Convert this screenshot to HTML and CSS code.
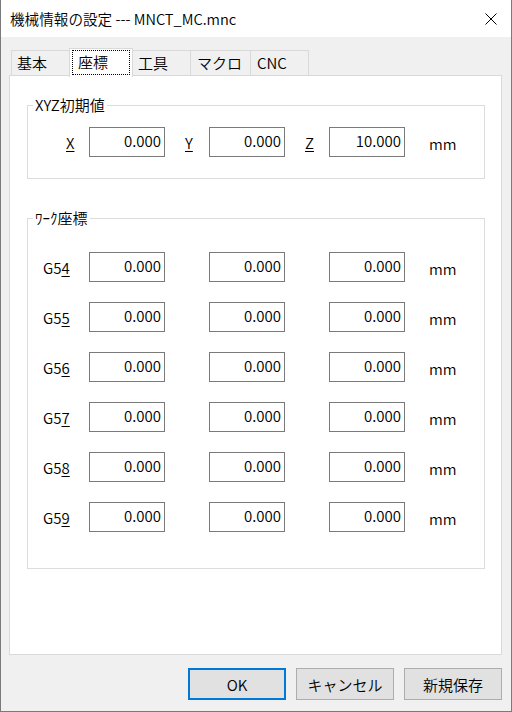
FILE: index.html
```html
<!DOCTYPE html>
<html lang="ja">
<head>
<meta charset="utf-8">
<title>機械情報の設定</title>
<link rel="stylesheet" href="styles.css">
</head>
<body>
<div class="window">
  <div class="titlebar">
    <span class="title">機械情報の設定 --- MNCT_MC.mnc</span>
    <svg class="close" width="12" height="12" viewBox="0 0 12 12"><path d="M0.5 0.5 L11.5 11.5 M11.5 0.5 L0.5 11.5" stroke="#000" stroke-width="1" fill="none"/></svg>
  </div>
  <div class="client">
    <div class="tabs">
      <div class="tab t1">基本</div>
      <div class="tab sel"><span class="focus">座標</span></div>
      <div class="tab t3">工具</div>
      <div class="tab t4">マクロ</div>
      <div class="tab t5">CNC</div>
    </div>
    <div class="panel">
      <div class="group g1">
        <span class="legend">XYZ初期値</span>
        <div class="rows">
          <div class="row">
            <span class="lbl l1x"><u>X</u></span><div class="box">0.000</div>
            <span class="lbl l2"><u>Y</u></span><div class="box">0.000</div>
            <span class="lbl l2"><u>Z</u></span><div class="box">10.000</div>
            <span class="lbl unit">mm</span>
          </div>
        </div>
      </div>
      <div class="group g2">
        <span class="legend">ﾜｰｸ座標</span>
        <div class="rows">
          <div class="row">
            <span class="lbl l1g">G5<u>4</u></span><div class="box">0.000</div>
            <span></span><div class="box">0.000</div>
            <span></span><div class="box">0.000</div>
            <span class="lbl unit">mm</span>
          </div>
          <div class="row">
            <span class="lbl l1g">G5<u>5</u></span><div class="box">0.000</div>
            <span></span><div class="box">0.000</div>
            <span></span><div class="box">0.000</div>
            <span class="lbl unit">mm</span>
          </div>
          <div class="row">
            <span class="lbl l1g">G5<u>6</u></span><div class="box">0.000</div>
            <span></span><div class="box">0.000</div>
            <span></span><div class="box">0.000</div>
            <span class="lbl unit">mm</span>
          </div>
          <div class="row">
            <span class="lbl l1g">G5<u>7</u></span><div class="box">0.000</div>
            <span></span><div class="box">0.000</div>
            <span></span><div class="box">0.000</div>
            <span class="lbl unit">mm</span>
          </div>
          <div class="row">
            <span class="lbl l1g">G5<u>8</u></span><div class="box">0.000</div>
            <span></span><div class="box">0.000</div>
            <span></span><div class="box">0.000</div>
            <span class="lbl unit">mm</span>
          </div>
          <div class="row">
            <span class="lbl l1g">G5<u>9</u></span><div class="box">0.000</div>
            <span></span><div class="box">0.000</div>
            <span></span><div class="box">0.000</div>
            <span class="lbl unit">mm</span>
          </div>
        </div>
      </div>
    </div>
    <div class="buttons">
      <button class="btn default">OK</button>
      <button class="btn">キャンセル</button>
      <button class="btn">新規保存</button>
    </div>
  </div>
</div>
</body>
</html>
```
FILE: styles.css
```css
* { box-sizing: border-box; }
html, body { margin: 0; padding: 0; }
body {
  width: 512px;
  height: 712px;
  background: #fff;
  font-family: "Noto Sans CJK JP", "Noto Sans", sans-serif;
  font-size: 15px;
  font-weight: 350;
  color: #000;
}
.window {
  width: 512px;
  height: 712px;
  border: 1px solid #7a7a7a;
  border-top: none;
  display: flex;
  flex-direction: column;
  background: #f0f0f0;
}
.titlebar {
  height: 37px;
  flex: none;
  background: #fff;
  display: flex;
  align-items: center;
  justify-content: space-between;
  padding: 0 14px 0 9px;
}
.title { font-size: 14.6px; line-height: 20px; }
.close { display: block; }
.client {
  flex: 1;
  min-height: 0;
  display: flex;
  flex-direction: column;
  padding: 11px 9px 11px 8px;
}
.tabs {
  flex: none;
  height: 27px;
  display: flex;
  align-items: flex-end;
  margin-left: 2px;
  position: relative;
  z-index: 1;
}
.tab {
  height: 25px;
  border: 1px solid #d9d9d9;
  border-bottom: none;
  background: #f0f0f0;
  padding-left: 5px;
  line-height: 24px;
  white-space: nowrap;
}
.t1 { width: 61px; }
.t3 { width: 61px; margin-left: -3px; padding-left: 7px; }
.t4 { width: 61px; margin-left: -1px; padding-left: 6px; }
.t5 { width: 59px; margin-left: -1px; padding-left: 6px; }
.sel {
  width: 64px;
  height: 29px;
  margin-left: -3px;
  margin-bottom: -2px;
  background: #fff;
  padding: 1px 2px 2px 2px;
  position: relative;
  z-index: 2;
}
.focus {
  display: block;
  height: 25px;
  border: 1px dotted #000;
  padding-left: 5px;
  line-height: 21px;
}
.panel {
  flex: 1;
  min-height: 0;
  background: #fff;
  border: 1px solid #d9d9d9;
  padding: 29px 16px 0 17px;
}
.group {
  border: 1px solid #dcdcdc;
}
.g1 { padding-bottom: 21px; }
.g2 { margin-top: 39px; padding-bottom: 36px; }
.legend {
  display: block;
  width: max-content;
  height: 20px;
  line-height: 20px;
  margin: -11px 0 0 5px;
  padding: 0 2px;
  background: #fff;
}
.g1 .rows { margin-top: 12px; }
.g2 .rows { margin-top: 24px; }
.rows {
  display: grid;
  row-gap: 20px;
}
.row {
  display: grid;
  grid-template-columns: 61px 76px 44px 76px 44px 76px 1fr;
  height: 30px;
}
.lbl {
  line-height: 32px;
  white-space: nowrap;
}
.l1x { padding-left: 38px; }
.l2 { padding-left: 20px; }
.l1g { padding-left: 15px; }
.unit { padding-left: 24px; line-height: 33px; }
u { text-decoration-thickness: 1px; text-underline-offset: 2px; }
.box {
  height: 30px;
  border: 1px solid #7a7a7a;
  background: #fff;
  text-align: right;
  padding-right: 3px;
  line-height: 26px;
}
.buttons {
  flex: none;
  display: flex;
  justify-content: flex-end;
  gap: 10px;
  margin-top: 13px;
}
.btn {
  width: 98px;
  height: 32px;
  background: #e1e1e1;
  border: 1px solid #adadad;
  font-family: inherit;
  font-size: 15px;
  font-weight: 350;
  color: #000;
  padding: 0;
  margin: 0;
  border-radius: 0;
}
.btn.default { border: 2px solid #0078d7; }
```
